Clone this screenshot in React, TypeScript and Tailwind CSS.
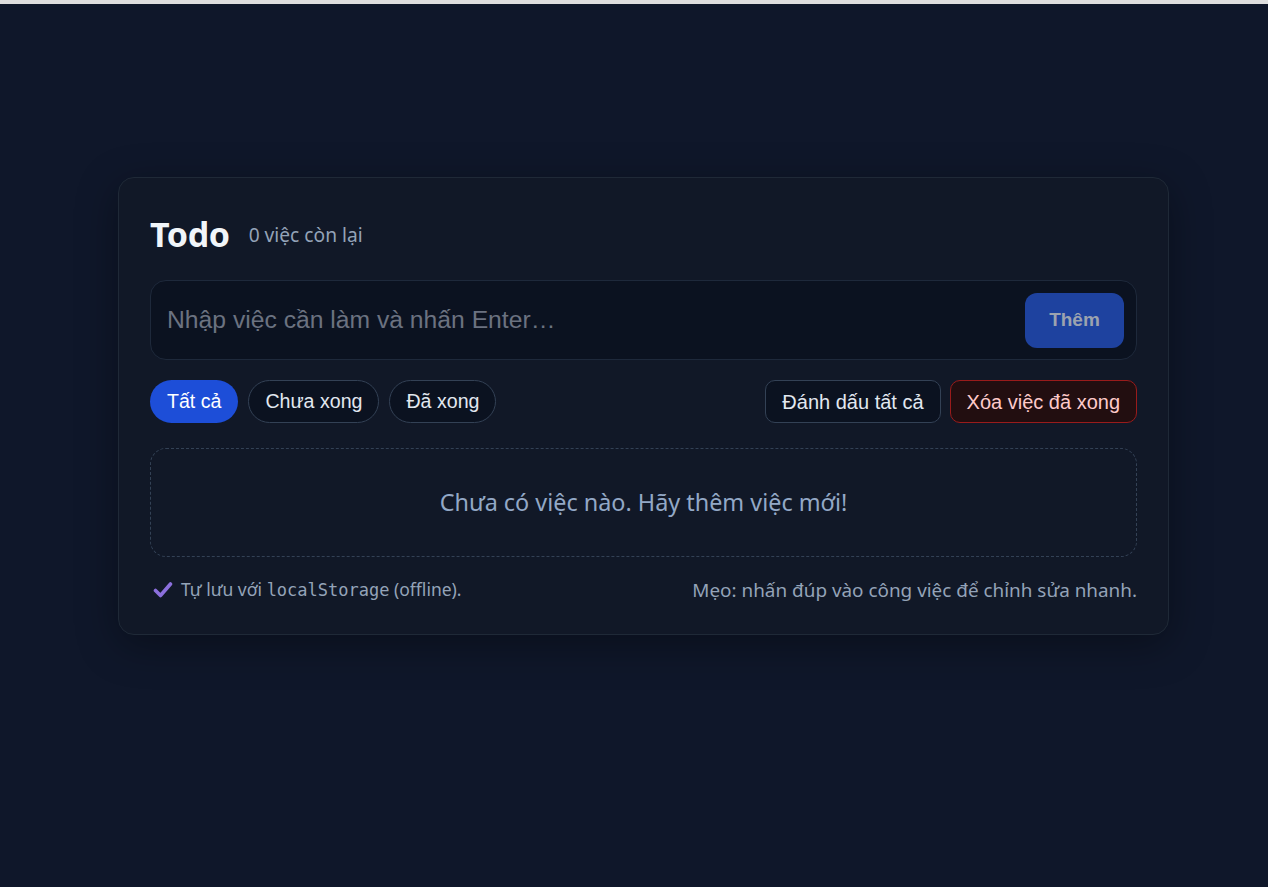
import React from "react";

const ui = { fontFamily: '"Noto Sans", "Open Sans", sans-serif' };
const arial = { fontFamily: '"Liberation Sans", Arial, sans-serif' };
const mono = { fontFamily: '"DejaVu Sans Mono", "Liberation Mono", monospace' };

export default function App() {
  return (
    <div className="min-h-screen w-full bg-[#0f172a]" style={ui}>
      <div className="h-[4px] w-full bg-[#dedede]" />
      <div className="pt-[173px] pl-[118px] pb-[100px]">
        <div className="w-[1051px] rounded-[16px] border border-[#1f2937] bg-[#111827] px-[31px] pt-[32px] pb-[32px] shadow-[0_10px_40px_rgba(0,0,0,0.35)]">
          <div className="flex h-[48px] items-center gap-[19px]">
            <h1 className="text-[34px] font-bold text-[#f1f5f9] tracking-[-0.4px] leading-none">Todo</h1>
            <span className="text-[19.2px] text-[#94a3b8] pt-[2px]">0 việc còn lại</span>
          </div>

          <div className="mt-[22px] flex h-[80px] items-center rounded-[16px] border border-[#1e293b] bg-[#0b1220] pl-[16px] pr-[12px]">
            <input
              className="flex-1 bg-transparent text-[24.7px] text-[#e5e7eb] outline-none placeholder:text-[#6b7280]"
              style={arial}
              placeholder="Nhập việc cần làm và nhấn Enter…"
            />
            <button
              className="h-[55px] w-[99px] rounded-[12px] bg-[#1e429f] text-[19px] font-bold text-[#9ca3af]"
              style={arial}
            >
              Thêm
            </button>
          </div>

          <div className="mt-[20px] flex h-[43px] items-center justify-between" style={arial}>
            <div className="flex gap-[10px]">
              <button className="h-[43px] rounded-full bg-[#1d4ed8] px-[17px] text-[19.6px] text-white">Tất cả</button>
              <button className="h-[43px] rounded-full border border-[#334155] bg-[#0b1220] px-[16px] text-[19.6px] text-[#e2e8f0]">Chưa xong</button>
              <button className="h-[43px] rounded-full border border-[#334155] bg-[#0b1220] px-[16px] text-[19.6px] text-[#e2e8f0]">Đã xong</button>
            </div>
            <div className="flex gap-[9px]">
              <button className="h-[43px] rounded-[10px] border border-[#334155] bg-[#0b1220] px-[16px] text-[20px] text-[#e2e8f0]">Đánh dấu tất cả</button>
              <button className="h-[43px] rounded-[10px] border border-[#991b1b] bg-[#220e10] px-[16px] text-[20px] text-[#fecaca]">Xóa việc đã xong</button>
            </div>
          </div>

          <div className="mt-[25px] flex h-[109px] items-center justify-center rounded-[16px] border border-dashed border-[#334155]">
            <p className="text-[23.4px] text-[#93a8c6]">Chưa có việc nào. Hãy thêm việc mới!</p>
          </div>

          <div className="mt-[21px] flex h-[24px] items-center justify-between text-[#94a3b8]">
            <div className="flex items-center gap-[8px] text-[17.5px]">
              <svg width="20" height="18" viewBox="0 0 20 18" className="ml-[3px]">
                <path d="M2.5 9.5 L7.5 14.5 L17.5 3" fill="none" stroke="#8b6fdc" strokeWidth="3.6" strokeLinecap="round" strokeLinejoin="round" />
              </svg>
              <span>
                Tự lưu với <code className="text-[17px]" style={mono}>localStorage</code> (offline).
              </span>
            </div>
            <span className="text-[18.9px]">Mẹo: nhấn đúp vào công việc để chỉnh sửa nhanh.</span>
          </div>
        </div>
      </div>
    </div>
  );
}
